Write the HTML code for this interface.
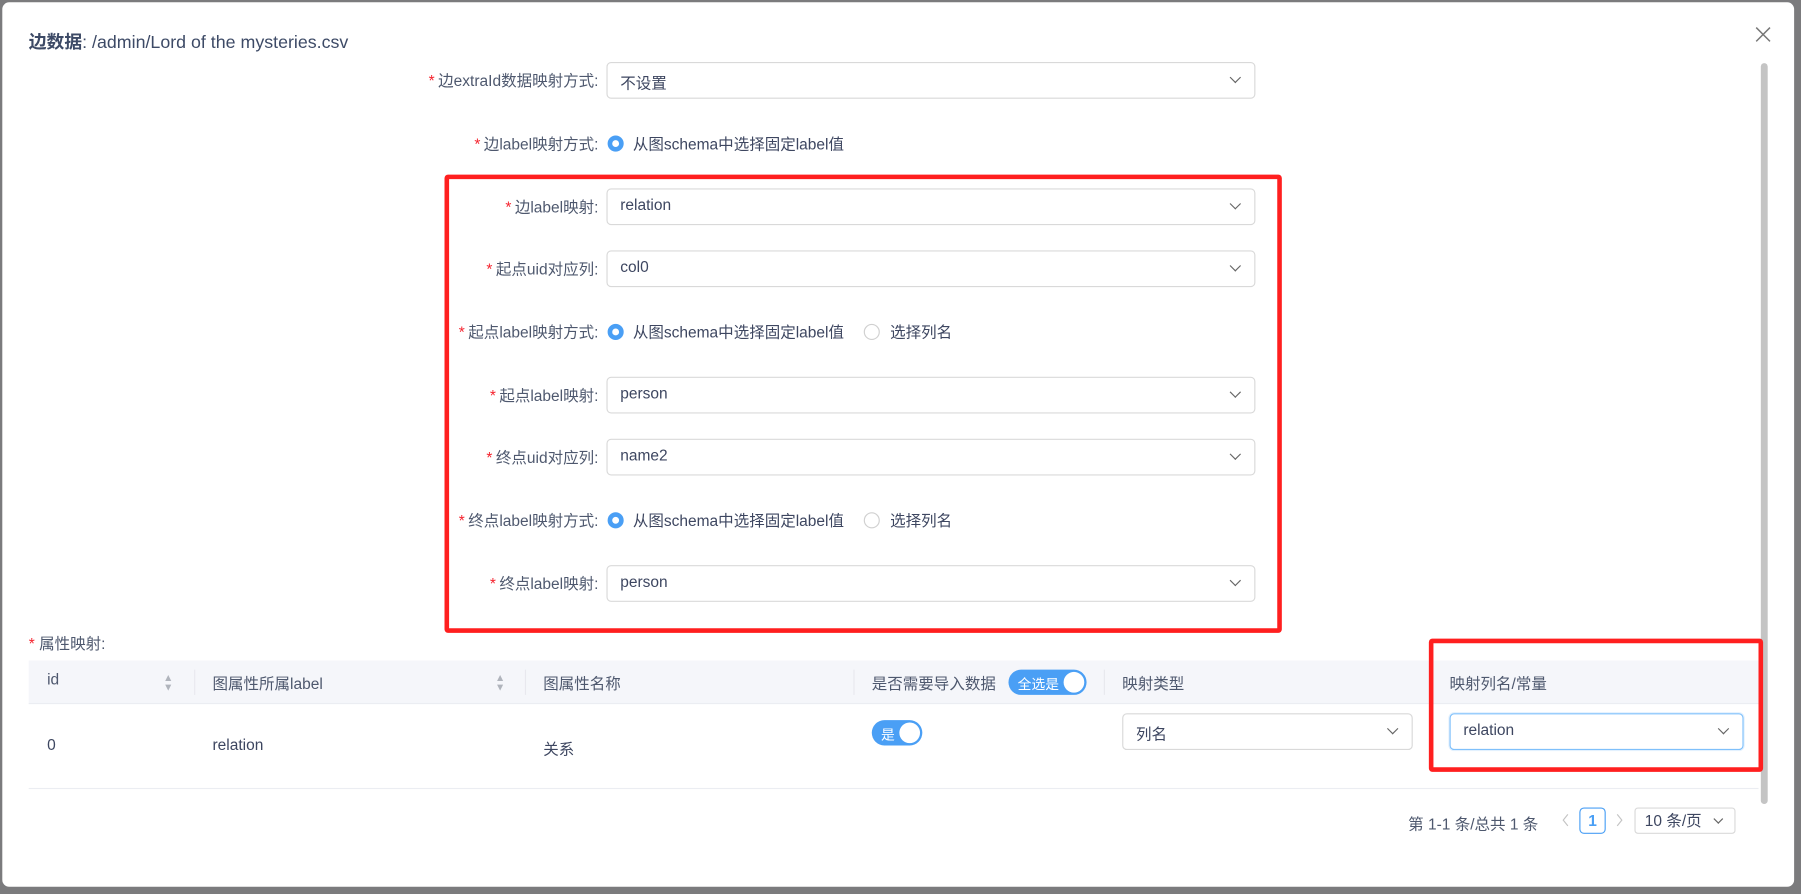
<!DOCTYPE html>
<html><head><meta charset="utf-8"><style>
html,body{margin:0;padding:0;width:1801px;height:894px;overflow:hidden;background:#7b7b7d;}
#w{position:absolute;left:0;top:0;width:1568px;height:778px;transform:scale(1.1486);transform-origin:0 0;font-family:"Liberation Sans","Noto Sans CJK SC",sans-serif;font-size:13.5px;color:#3d4660;}
.modal{position:absolute;left:2px;top:2px;width:1560px;height:770px;background:#fff;border-radius:6px;}
.a{position:absolute;}
.lbl{position:absolute;right:1047px;width:300px;text-align:right;color:#4e586e;white-space:nowrap;margin-top:-2px;}
.lbl b{color:#f5222d;font-weight:normal;margin-right:3px;}
.rt{margin-top:-2px;}
.sel{position:absolute;left:528px;width:563px;height:30px;border:1px solid #d9d9d9;border-radius:4px;box-sizing:content-box;}
.sel span{position:absolute;left:11px;top:6px;color:#3d4660;}
.chev{position:absolute;right:13px;width:6px;height:6px;border-right:1px solid #666;border-bottom:1px solid #666;transform:rotate(45deg);top:9px;}
.radio{position:absolute;width:14px;height:14px;border-radius:50%;box-sizing:border-box;}
.on{border:4px solid #4a9ff5;background:#fff;}
.off{border:1px solid #d0d0d0;}
.red{position:absolute;border:4px solid #ff1f1f;border-radius:3px;box-sizing:border-box;}
.th{position:absolute;top:584px;color:#4e586e;}
.sep{position:absolute;top:583px;width:1px;height:22px;background:#e8e8ee;}
.sort{position:absolute;top:586px;font-size:9px;line-height:8px;color:#b0b4bc;}
</style></head><body><div id="w">
<div class="modal"></div>
<div class="a" style="left:25px;top:25px;font-size:15.5px;color:#3d4a66;"><b>边数据</b>: /admin/Lord of the mysteries.csv</div>
<svg class="a" style="left:1528px;top:23px" width="14" height="14"><path d="M1 1L13 13M13 1L1 13" stroke="#777" stroke-width="1.3"/></svg>
<div class="a" style="left:1533px;top:55px;width:6px;height:645px;background:#c4c4c4;border-radius:3px;"></div>

<div class="lbl" style="top:61px"><b>*</b>边extraId数据映射方式:</div>
<div class="sel" style="top:54px"><span>不设置</span><i class="chev"></i></div>

<div class="lbl" style="top:116px"><b>*</b>边label映射方式:</div>
<div class="radio on" style="left:529px;top:118px"></div><div class="a rt" style="left:551px;top:116px">从图schema中选择固定label值</div>

<div class="red" style="left:387px;top:152px;width:729px;height:399px"></div>

<div class="lbl" style="top:171px"><b>*</b>边label映射:</div>
<div class="sel" style="top:164px"><span>relation</span><i class="chev"></i></div>
<div class="lbl" style="top:225px"><b>*</b>起点uid对应列:</div>
<div class="sel" style="top:218px"><span>col0</span><i class="chev"></i></div>
<div class="lbl" style="top:280px"><b>*</b>起点label映射方式:</div>
<div class="radio on" style="left:529px;top:282px"></div><div class="a rt" style="left:551px;top:280px">从图schema中选择固定label值</div>
<div class="radio off" style="left:752px;top:282px"></div><div class="a rt" style="left:775px;top:280px">选择列名</div>
<div class="lbl" style="top:335px"><b>*</b>起点label映射:</div>
<div class="sel" style="top:328px"><span>person</span><i class="chev"></i></div>
<div class="lbl" style="top:389px"><b>*</b>终点uid对应列:</div>
<div class="sel" style="top:382px"><span>name2</span><i class="chev"></i></div>
<div class="lbl" style="top:444px"><b>*</b>终点label映射方式:</div>
<div class="radio on" style="left:529px;top:446px"></div><div class="a rt" style="left:551px;top:444px">从图schema中选择固定label值</div>
<div class="radio off" style="left:752px;top:446px"></div><div class="a rt" style="left:775px;top:444px">选择列名</div>
<div class="lbl" style="top:499px"><b>*</b>终点label映射:</div>
<div class="sel" style="top:492px"><span>person</span><i class="chev"></i></div>

<div class="a" style="left:25px;top:549px;color:#4e586e"><span style="color:#f5222d">*</span> 属性映射:</div>
<div class="a" style="left:25px;top:575px;width:1506px;height:37px;background:#f5f6fa;border-bottom:1px solid #ebedf2;"></div>
<div class="th" style="left:41px">id</div><div class="sort" style="left:142px">▲<br>▼</div>
<div class="sep" style="left:169px"></div>
<div class="th" style="left:185px">图属性所属label</div><div class="sort" style="left:431px">▲<br>▼</div>
<div class="sep" style="left:457px"></div>
<div class="th" style="left:473px">图属性名称</div>
<div class="sep" style="left:743px"></div>
<div class="th" style="left:759px">是否需要导入数据</div>
<div class="a" style="left:878px;top:583px;width:68px;height:22px;border-radius:11px;background:#4a9ff5;"><span style="position:absolute;left:8px;top:4px;color:#fff;font-size:12px">全选是</span><span style="position:absolute;right:2px;top:2px;width:18px;height:18px;border-radius:50%;background:#fff"></span></div>
<div class="sep" style="left:961px"></div>
<div class="th" style="left:977px">映射类型</div>
<div class="sep" style="left:1245px"></div>
<div class="th" style="left:1262px">映射列名/常量</div>

<div class="a" style="left:41px;top:641px">0</div>
<div class="a" style="left:185px;top:641px">relation</div>
<div class="a" style="left:473px;top:641px">关系</div>
<div class="a" style="left:759px;top:627px;width:44px;height:22px;border-radius:11px;background:#4a9ff5;"><span style="position:absolute;left:8px;top:4px;color:#fff;font-size:12px">是</span><span style="position:absolute;right:2px;top:2px;width:18px;height:18px;border-radius:50%;background:#fff"></span></div>
<div class="sel" style="left:977px;top:621px;width:251px"><span>列名</span><i class="chev"></i></div>
<div class="sel" style="left:1262px;top:621px;width:254px;border-color:#7fc0fb;box-shadow:0 0 0 1px #e3f1fe"><span>relation</span><i class="chev"></i></div>
<div class="a" style="left:25px;top:686px;width:1506px;height:1px;background:#ebedf2"></div>
<div class="red" style="left:1244px;top:556px;width:291px;height:116px"></div>

<div class="a" style="left:1226px;top:706px;color:#4e586e">第 1-1 条/总共 1 条</div>
<svg class="a" style="left:1359px;top:708px" width="8" height="12"><path d="M6 1L2 6L6 11" stroke="#c4c4c4" fill="none"/></svg>
<div class="a" style="left:1375px;top:703px;width:21px;height:21px;border:1px solid #4a9ff5;border-radius:4px;color:#4a9ff5;text-align:center;line-height:21px;font-weight:bold">1</div>
<svg class="a" style="left:1406px;top:708px" width="8" height="12"><path d="M2 1L6 6L2 11" stroke="#c4c4c4" fill="none"/></svg>
<div class="a" style="left:1423px;top:703px;width:86px;height:21px;border:1px solid #d9d9d9;border-radius:3px;line-height:21px;"><span style="margin-left:8px">10 条/页</span><i class="chev" style="right:11px;top:6px;width:5px;height:5px"></i></div>
</div></body></html>
